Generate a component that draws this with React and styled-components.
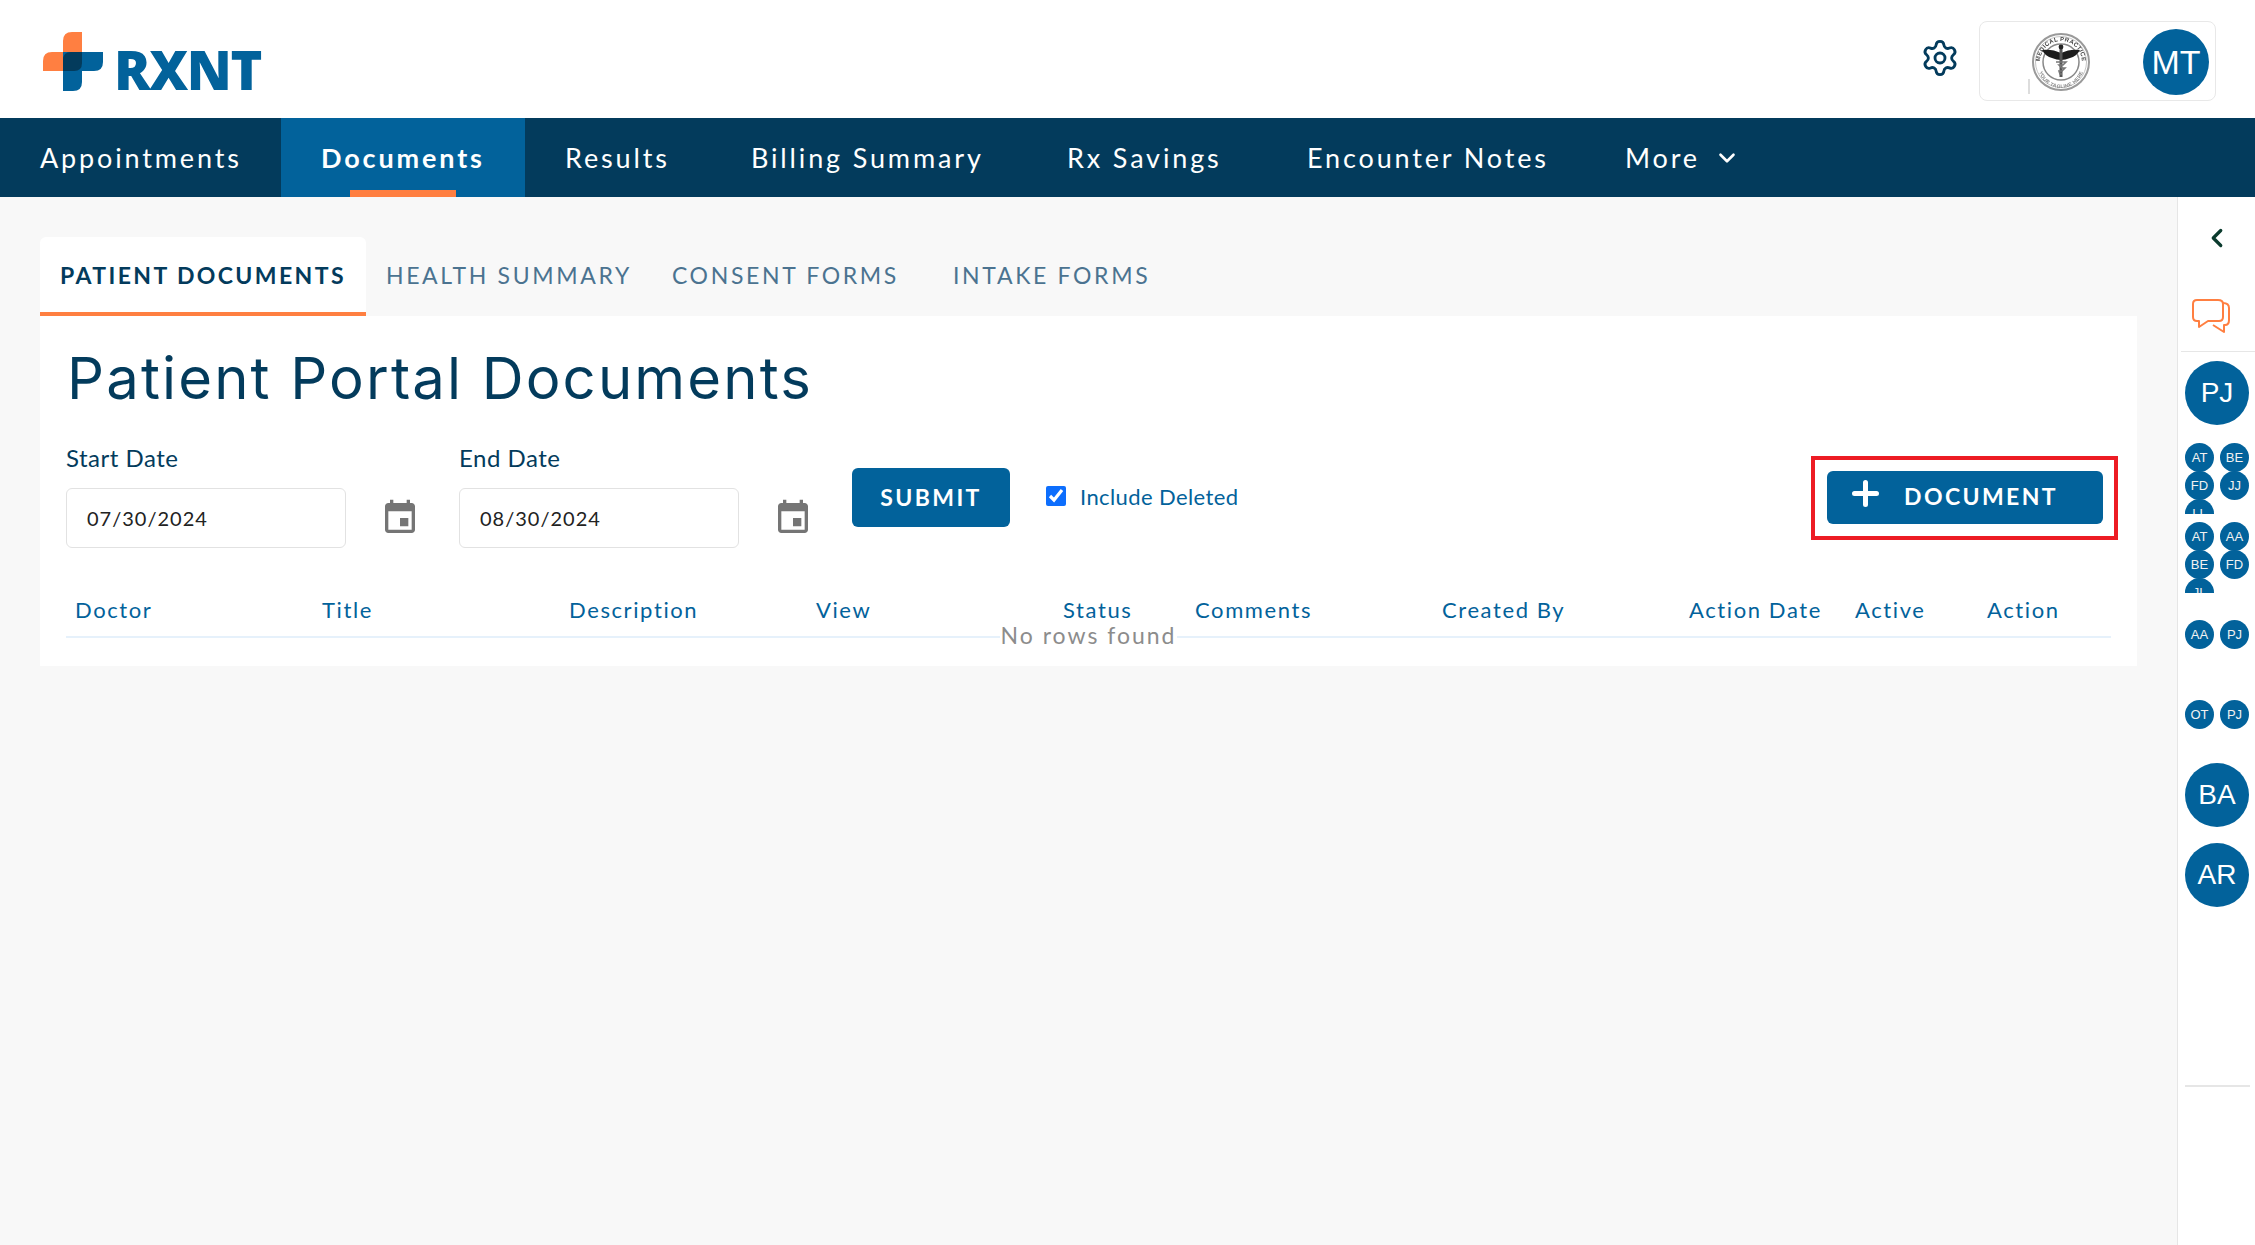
import React from "react";
import styled, { createGlobalStyle } from "styled-components";
import { Settings, ChevronLeft, ChevronDown } from "lucide-react";

const navItems = [
    { name: "Appointments", width: 281 },
    { name: "Documents", width: 244 },
    { name: "Results", width: 186 },
    { name: "Billing Summary", width: 316 },
    { name: "Rx Savings", width: 240 },
    { name: "Encounter Notes", width: 318 },
];
const columns = [
    { name: "Doctor", width: 247 },
    { name: "Title", width: 247 },
    { name: "Description", width: 247 },
    { name: "View", width: 247 },
    { name: "Status", width: 132 },
    { name: "Comments", width: 247 },
    { name: "Created By", width: 247 },
    { name: "Action Date", width: 166 },
    { name: "Active", width: 132 },
    { name: "Action", width: 133 },
];

const CalendarIcon = () => (
    <CalendarSvg viewBox="0 0 24 24">
        <path d="M17 12h-5v5h5v-5zM16 1v2H8V1H6v2H5c-1.11 0-1.99.9-1.99 2L3 19c0 1.1.89 2 2 2h14c1.1 0 2-.9 2-2V5c0-1.1-.9-2-2-2h-1V1h-2zm3 18H5V8h14v11z" />
    </CalendarSvg>
);

const LogoMark = () => (
    <svg width="60" height="59" viewBox="0 0 60 59">
        <path d="M20 20V9q0-9 9-9h10v39H0V29q0-9 9-9z" fill="#ff7f41" />
        <path d="M20 20h40v10q0 9-9 9H39v11q0 9-9 9H20z" fill="#02629b" />
        <path d="M20 39V28q0-8 8-8h11v11q0 8-8 8z" fill="#033b5c" />
    </svg>
);

const Seal = () => (
    <SealSvg viewBox="0 0 64 65">
        <rect x="0" y="50" width="2" height="15" fill="#ddd" />
        <circle cx="33" cy="33" r="28" fill="none" stroke="#9a9a9a" strokeWidth="2" />
        <circle cx="33" cy="33" r="25.5" fill="none" stroke="#c4c4c4" strokeWidth="1" />
        <circle cx="33" cy="33" r="18" fill="none" stroke="#888" strokeWidth="1.5" />
        <defs>
            <path id="sealTop" d="M12 33a21 21 0 0 1 42 0" />
            <path id="sealBottom" d="M10 36a23 23 0 0 0 46 0" />
        </defs>
        <SealText>
            <textPath href="#sealTop" startOffset="50%" textAnchor="middle">MEDICAL PRACTICE</textPath>
        </SealText>
        <SealText $light>
            <textPath href="#sealBottom" startOffset="50%" textAnchor="middle">YOUR TAGLINE HERE</textPath>
        </SealText>
        <path d="M33 24c-6-3-13-4-19-3 2 4 6 7 10 8 3 1 6 2 9 2s6-1 9-2c4-1 8-4 10-8-6-1-13 0-19 3z" fill="#1c1c1c" />
        <rect x="31.5" y="17" width="3" height="31" fill="#555" />
        <circle cx="33" cy="18" r="2.4" fill="#222" />
        <path d="M28 33h10l-3 3h-4l3 3h3l-3 3h-3l1 3h2" fill="none" stroke="#777" strokeWidth="1.6" />
    </SealSvg>
);

const ChatIcon = () => (
    <svg width="38" height="35" viewBox="0 0 38 35" fill="none" stroke="#ff7f41" strokeWidth="2" strokeLinejoin="round">
        <path d="M5 1h21q5 0 5 4v13q0 4-4 4H16l-9 6v-6H5q-4 0-4-4V5q0-4 4-4z" />
        <path d="M31 4q6 0 6 5v12q0 5-4 5h-1v7l-11-7" />
    </svg>
);

const App = () => {
    return (
        <Page>
            <GlobalStyle />
            <Header>
                <Logo>
                    <LogoMark />
                    <LogoText>RXNT</LogoText>
                </Logo>
                <GearButton>
                    <Settings size={40} strokeWidth={1.7} color="#033b5c" />
                </GearButton>
                <ProfileBox>
                    <Seal />
                    <UserAvatar>MT</UserAvatar>
                </ProfileBox>
            </Header>

            <Nav>
                {navItems.map((item) => (
                    <NavItem key={item.name} $width={item.width} $active={item.name === "Documents"}>{item.name}</NavItem>
                ))}
                <NavItem>
                    More
                    <MoreChevron><ChevronDown size={26} strokeWidth={2.4} color="#fff" /></MoreChevron>
                </NavItem>
            </Nav>

            <Body>
                <Main>
                    <Tabs>
                        <Tab $active>PATIENT DOCUMENTS</Tab>
                        <Tab>HEALTH SUMMARY</Tab>
                        <Tab>CONSENT FORMS</Tab>
                        <Tab $gap={14}>INTAKE FORMS</Tab>
                    </Tabs>
                    <Card>
                        <Title>Patient Portal Documents</Title>
                        <FilterRow>
                            <Field>
                                <FieldLabel>Start Date</FieldLabel>
                                <FieldRow>
                                    <DateInput readOnly value="07/30/2024" />
                                    <CalendarIcon />
                                </FieldRow>
                            </Field>
                            <Field>
                                <FieldLabel>End Date</FieldLabel>
                                <FieldRow>
                                    <DateInput readOnly value="08/30/2024" />
                                    <CalendarIcon />
                                </FieldRow>
                            </Field>
                            <SubmitButton>SUBMIT</SubmitButton>
                            <CheckLabel>
                                <CheckBox type="checkbox" checked readOnly />
                                Include Deleted
                            </CheckLabel>
                            <Highlight>
                                <DocumentButton>
                                    <PlusIcon viewBox="0 0 27 27">
                                        <path d="M13.5 2.5v22M2.5 13.5h22" stroke="#fff" strokeWidth="5" strokeLinecap="round" />
                                    </PlusIcon>
                                    DOCUMENT
                                </DocumentButton>
                            </Highlight>
                        </FilterRow>
                        <Table>
                            <HeadRow>
                                {columns.map((col) => (
                                    <HeadCell key={col.name} $width={col.width}>{col.name}</HeadCell>
                                ))}
                            </HeadRow>
                            <NoRows>No rows found</NoRows>
                        </Table>
                    </Card>
                </Main>

                <Sidebar>
                    <Collapse><ChevronLeft size={30} strokeWidth={2.6} color="#0b3b2e" /></Collapse>
                    <ChatSlot><ChatIcon /></ChatSlot>
                    <SideDivider />
                    <BigAvatar $top={9}>PJ</BigAvatar>
                    <AvatarGroup $top={18} $clip>
                        {["AT", "BE", "FD", "JJ", "LL"].map((a) => <SmallAvatar key={a}>{a}</SmallAvatar>)}
                    </AvatarGroup>
                    <AvatarGroup $top={8} $clip>
                        {["AT", "AA", "BE", "FD", "JL"].map((a) => <SmallAvatar key={a}>{a}</SmallAvatar>)}
                    </AvatarGroup>
                    <AvatarGroup $top={27}>
                        {["AA", "PJ"].map((a) => <SmallAvatar key={a}>{a}</SmallAvatar>)}
                    </AvatarGroup>
                    <AvatarGroup $top={51}>
                        {["OT", "PJ"].map((a) => <SmallAvatar key={a}>{a}</SmallAvatar>)}
                    </AvatarGroup>
                    <BigAvatar $top={34}>BA</BigAvatar>
                    <BigAvatar $top={16}>AR</BigAvatar>
                    <BottomDivider />
                </Sidebar>
            </Body>
        </Page>
    );
};

export default App;

// Styled components
const GlobalStyle = createGlobalStyle`
    html, body {
        margin: 0;
        padding: 0;
        background: #f8f8f8;
    }
    * {
        box-sizing: border-box;
    }
`;

const Page = styled.div`
    width: 2255px;
    height: 1245px;
    overflow: hidden;
    display: flex;
    flex-direction: column;
    font-family: "Lato", "Open Sans", sans-serif;
    background: #f8f8f8;
`;

const Header = styled.header`
    height: 118px;
    flex: none;
    display: flex;
    align-items: center;
    padding: 4px 39px 0 43px;
    background: #fff;
`;

const Logo = styled.div`
    display: flex;
    align-items: center;
    gap: 11px;
    margin-right: auto;
`;

const LogoText = styled.span`
    margin-top: 17px;
    font-family: "Open Sans", sans-serif;
    font-weight: 800;
    font-size: 54px;
    line-height: 59px;
    letter-spacing: -1.4px;
    color: #02629b;
`;

const GearButton = styled.div`
    display: flex;
    margin: 0 19px 6px 0;
`;

const ProfileBox = styled.div`
    width: 237px;
    height: 80px;
    display: flex;
    align-items: center;
    justify-content: space-between;
    padding: 0 6px 0 48px;
    border: 1px solid #e8e8e8;
    border-radius: 8px;
`;

const SealSvg = styled.svg`
    width: 64px;
    height: 65px;
    filter: blur(0.4px);
`;

const SealText = styled.text`
    font-family: "Liberation Sans", sans-serif;
    font-size: ${(p) => (p.$light ? 5 : 6)}px;
    font-weight: 700;
    letter-spacing: 0.3px;
    fill: ${(p) => (p.$light ? "#888" : "#444")};
`;

const UserAvatar = styled.div`
    width: 66px;
    height: 66px;
    margin-top: 2px;
    border-radius: 50%;
    display: flex;
    align-items: center;
    justify-content: center;
    background: #02629b;
    color: #fff;
    font-family: "Liberation Sans", sans-serif;
    font-size: 34px;
`;

const Nav = styled.nav`
    height: 79px;
    flex: none;
    display: flex;
    background: #033b5c;
`;

const NavItem = styled.div`
    position: relative;
    width: ${(p) => (p.$width ? `${p.$width}px` : "auto")};
    display: flex;
    align-items: center;
    padding: 0 40px;
    font-size: 27px;
    letter-spacing: 2.85px;
    white-space: nowrap;
    font-weight: ${(p) => (p.$active ? 700 : 400)};
    color: #fff;
    background: ${(p) => (p.$active ? "#02629b" : "transparent")};

    ${(p) => p.$active && `
        &::after {
            content: "";
            position: absolute;
            left: 69px;
            bottom: 0;
            width: 106px;
            height: 7px;
            background: #ff7f41;
        }
    `}
`;

const MoreChevron = styled.span`
    display: flex;
    margin-left: 14px;
`;

const Body = styled.div`
    flex: 1;
    display: flex;
    min-height: 0;
`;

const Main = styled.main`
    flex: 1;
    padding: 40px 40px 0;
`;

const Tabs = styled.div`
    display: flex;
    height: 79px;
`;

const Tab = styled.div`
    display: flex;
    align-items: center;
    padding: 0 20px;
    margin-left: ${(p) => p.$gap || 0}px;
    font-size: 23px;
    letter-spacing: ${(p) => (p.$active ? 2.4 : 2.65)}px;
    color: ${(p) => (p.$active ? "#033b5c" : "#4b7390")};
    font-weight: ${(p) => (p.$active ? 700 : 400)};
    background: ${(p) => (p.$active ? "#fff" : "transparent")};
    border-radius: 6px 6px 0 0;
    border-bottom: 4px solid ${(p) => (p.$active ? "#ff7f41" : "transparent")};
`;

const Card = styled.section`
    height: 350px;
    padding: 27px 26px 0;
    background: #fff;
`;

const Title = styled.h1`
    margin: 0 0 32px 1px;
    font-family: "Inter", sans-serif;
    font-weight: 400;
    font-size: 58px;
    line-height: 70px;
    letter-spacing: 2.15px;
    color: #033b5c;
`;

const FilterRow = styled.div`
    display: flex;
    align-items: flex-start;
`;

const Field = styled.div`
    display: flex;
    flex-direction: column;
    margin-right: 39px;
`;

const FieldLabel = styled.label`
    height: 28px;
    margin-bottom: 15px;
    font-size: 24px;
    line-height: 26px;
    letter-spacing: 0.5px;
    color: #033b5c;
`;

const FieldRow = styled.div`
    display: flex;
    align-items: center;
    gap: 34px;
`;

const DateInput = styled.input`
    width: 280px;
    height: 60px;
    padding: 0 20px;
    border: 1px solid #e2e2e2;
    border-radius: 6px;
    background: #fff;
    font-family: inherit;
    font-size: 20px;
    letter-spacing: 1px;
    color: #222;
    outline: none;
`;

const CalendarSvg = styled.svg`
    width: 40px;
    height: 40px;
    fill: #757575;
`;

const SubmitButton = styled.button`
    width: 158px;
    height: 59px;
    margin-top: 23px;
    padding: 0 0 2px;
    border: none;
    border-radius: 6px;
    background: #02629b;
    color: #fff;
    font-family: inherit;
    font-weight: 700;
    font-size: 23px;
    letter-spacing: 2.4px;
`;

const CheckLabel = styled.label`
    display: flex;
    align-items: center;
    gap: 14px;
    height: 30px;
    margin: 36px 0 0 36px;
    font-size: 22px;
    letter-spacing: 0.4px;
    color: #02629b;
`;

const CheckBox = styled.input`
    width: 20px;
    height: 20px;
    margin: 0;
    accent-color: #0d6efd;
`;

const Highlight = styled.div`
    margin: 11px -7px 0 auto;
    padding: 11px 11px 12px 12px;
    border: 4px solid #ed1c24;
`;

const DocumentButton = styled.button`
    width: 276px;
    height: 53px;
    display: flex;
    align-items: center;
    padding: 0 0 3px 25px;
    border: none;
    border-radius: 6px;
    background: #02629b;
    color: #fff;
    font-family: inherit;
    font-weight: 700;
    font-size: 23px;
    letter-spacing: 2.4px;
`;

const PlusIcon = styled.svg`
    width: 27px;
    height: 27px;
    margin: -6px 25px 0 0;
`;

const Table = styled.div`
    position: relative;
    margin-top: 32px;
`;

const HeadRow = styled.div`
    display: flex;
    height: 58px;
    border-bottom: 2px solid #e6f1fb;
`;

const HeadCell = styled.div`
    width: ${(p) => p.$width}px;
    padding: 1px 9px 0;
    line-height: 58px;
    font-size: 22px;
    letter-spacing: 1.6px;
    color: #02629b;
`;

const NoRows = styled.div`
    position: absolute;
    top: 41px;
    left: 50%;
    transform: translateX(-50%);
    padding: 0 1px;
    background: #fff;
    font-size: 23px;
    line-height: 28px;
    letter-spacing: 2px;
    white-space: nowrap;
    color: #8c8c8c;
`;

const Sidebar = styled.aside`
    width: 78px;
    flex: none;
    display: flex;
    flex-direction: column;
    padding-left: 7px;
    border-left: 1px solid #e6e6e6;
    background: #fff;
    font-family: "Liberation Sans", sans-serif;
`;

const Collapse = styled.div`
    height: 82px;
    display: flex;
    align-items: center;
    justify-content: center;
    margin-left: -7px;
`;

const ChatSlot = styled.div`
    height: 72px;
    padding: 20px 0 0 7px;
`;

const SideDivider = styled.div`
    height: 1px;
    flex: none;
    margin-left: -4px;
    background: #e6e6e6;
`;

const BigAvatar = styled.div`
    width: 64px;
    height: 64px;
    flex: none;
    margin-top: ${(p) => p.$top}px;
    border-radius: 50%;
    display: flex;
    align-items: center;
    justify-content: center;
    background: #02629b;
    color: #fff;
    font-size: 28px;
`;

const AvatarGroup = styled.div`
    width: 64px;
    flex: none;
    margin-top: ${(p) => p.$top}px;
    display: grid;
    grid-template-columns: 29px 29px;
    grid-auto-rows: 28px;
    column-gap: 6px;
    height: ${(p) => (p.$clip ? "71px" : "29px")};
    overflow: hidden;
`;

const SmallAvatar = styled.div`
    width: 29px;
    height: 29px;
    border-radius: 50%;
    display: flex;
    align-items: center;
    justify-content: center;
    background: #02629b;
    color: #f2f2f2;
    font-size: 13px;
`;

const BottomDivider = styled.div`
    width: 65px;
    height: 2px;
    flex: none;
    margin-top: 178px;
    background: #e6e6e6;
`;
